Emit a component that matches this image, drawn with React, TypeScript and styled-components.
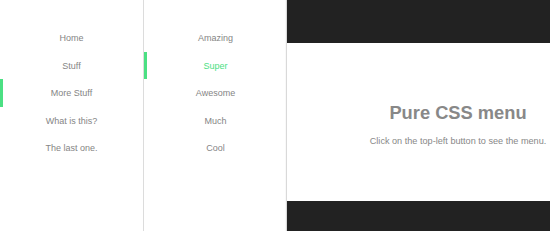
import React, { FC } from 'react'
import styled, { createGlobalStyle } from 'styled-components'

const GlobalStyle = createGlobalStyle`
  html, body {
    margin: 0;
    padding: 0;
    background: #fff;
    overflow: hidden;
  }
  body {
    font-family: 'Liberation Sans', Arial, sans-serif;
  }
`

const Page = styled.div`
  display: flex;
  height: 231px;
  width: 550px;
`

const Menu = styled.ul<{ $divider?: boolean }>`
  list-style: none;
  margin: 0;
  padding: 24.25px 0 0;
  width: 143px;
  flex-shrink: 0;
  border-right: ${p => (p.$divider ? '1px solid #dcdcdc' : 'none')};
`

const MenuItem = styled.li<{ $active?: boolean; $current?: boolean }>`
  height: 27.5px;
  display: flex;
  align-items: center;
  justify-content: center;
  font-size: 9px;
  color: ${p => (p.$current ? '#4be083' : '#858585')};
  box-shadow: ${p => (p.$active ? 'inset 3px 0 0 #4be083' : 'none')};
  cursor: pointer;
`

const Main = styled.main`
  display: flex;
  flex-direction: column;
  flex: 1;
  min-width: 0;
  box-shadow: -1px 0 1px rgba(0, 0, 0, 0.15);
`

const Bar = styled.div<{ $h: number }>`
  height: ${p => p.$h}px;
  background: #222;
  flex-shrink: 0;
`

const Content = styled.section`
  flex: 1;
  display: flex;
  flex-direction: column;
  align-items: center;
  padding: 61px 0 0 79px;
  background: #fff;
  white-space: nowrap;
`

const Title = styled.h1`
  margin: 0;
  font-size: 18.3px;
  line-height: 18px;
  font-weight: bold;
  color: #888;
`

const Subtitle = styled.p`
  margin: 13.5px 0 0;
  font-size: 9.15px;
  line-height: 11px;
  color: #888;
`

interface IItem {
  label: string,
  active?: boolean,
  current?: boolean
}

const first: IItem[] = [
  { label: 'Home' },
  { label: 'Stuff' },
  { label: 'More Stuff', active: true },
  { label: 'What is this?' },
  { label: 'The last one.' }
]

const second: IItem[] = [
  { label: 'Amazing' },
  { label: 'Super', active: true, current: true },
  { label: 'Awesome' },
  { label: 'Much' },
  { label: 'Cool' }
]

const App: FC = () => {
  return (
    <>
      <GlobalStyle />
      <Page>
        <Menu $divider>
          {first.map(item => (
            <MenuItem key={item.label} $active={item.active} $current={item.current}>
              {item.label}
            </MenuItem>
          ))}
        </Menu>
        <Menu>
          {second.map(item => (
            <MenuItem key={item.label} $active={item.active} $current={item.current}>
              {item.label}
            </MenuItem>
          ))}
        </Menu>
        <Main>
          <Bar $h={43} />
          <Content>
            <Title>Pure CSS menu</Title>
            <Subtitle>Click on the top-left button to see the menu.</Subtitle>
          </Content>
          <Bar $h={30.5} />
        </Main>
      </Page>
    </>
  )
}

export default App
